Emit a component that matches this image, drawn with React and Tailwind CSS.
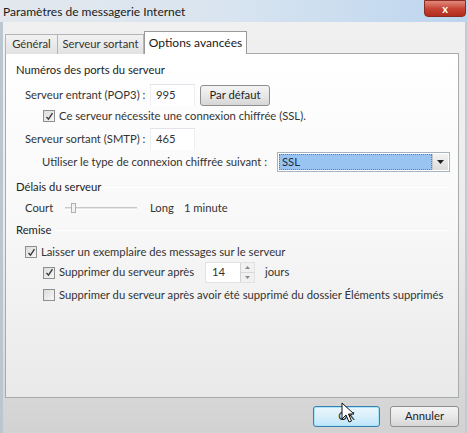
import React from "react";

const font = { fontFamily: 'Lato, "Noto Sans", sans-serif' };

function Check({ checked }) {
  return (
    <span className="inline-flex w-[12px] h-[12px] shrink-0 items-center justify-center border border-[#8e8f8f] bg-gradient-to-br from-[#dcdcdc] to-[#f7f7f7]">
      {checked && (
        <svg width="9" height="9" viewBox="0 0 9 9">
          <path d="M1.5 5 L3.5 7.2 L7.5 1.2" fill="none" stroke="#3b3b3b" strokeWidth="1.4" />
        </svg>
      )}
    </span>
  );
}

function Legend({ children }) {
  return (
    <div className="flex items-center h-[14px] pl-[10px] pr-[9px]">
      <span className="text-[#222]">{children}</span>
      <span className="flex-1 ml-[4px] h-px bg-[#c9c9c9] border-b border-white" />
    </div>
  );
}

function Field({ value }) {
  return (
    <div className="w-[45px] h-[22px] flex items-center pl-[5px] bg-white border-t border-[#e2e3ea] border-l border-l-[#eceef2] border-r border-r-[#eceef2]">
      {value}
    </div>
  );
}

export default function App() {
  return (
    <div style={font} className="relative w-[467px] h-[433px] overflow-hidden whitespace-nowrap text-[11.25px] text-[#333] bg-[#d6d6d6]">
      {/* title bar */}
      <div className="h-[22px] flex items-start justify-between bg-gradient-to-r from-[#e3e8ee] via-[#d8e4f0] to-[#bcd5ef]">
        <div className="pl-[3px] pt-[3px] text-[12px] text-[#1a1a1a]">Paramètres de messagerie Internet</div>
        <div className="w-[42px] h-[17px] mr-[1px] rounded-b-[4px] flex items-center justify-center bg-gradient-to-b from-[#e08a7e] via-[#c74535] to-[#b12d1f] border border-[#8a2a20] text-white text-[11px] font-bold leading-none">
          x
        </div>
      </div>

      {/* body */}
      <div className="h-[411px] flex flex-col pl-[2px] pr-[6px] border-l-[3px] border-l-[#bcc6d0] border-r-[2px] border-r-[#c3ccd5] bg-gradient-to-b from-[#f0f0f0] via-[#ececec] to-[#d2d2d2]">
        {/* tabs */}
        <div className="flex items-end h-[32px] pt-[9px] -mb-px relative z-10">
          <div className="h-[20px] w-[53px] flex items-center justify-center border border-[#b5b5b5] border-b-0 bg-gradient-to-b from-[#f2f2f2] to-[#e2e2e2] text-[#333]">Général</div>
          <div className="h-[20px] w-[86px] flex items-center justify-center border border-[#b5b5b5] border-b-0 border-l-0 bg-gradient-to-b from-[#f2f2f2] to-[#e2e2e2] text-[#333]">Serveur sortant</div>
          <div className="h-[23px] w-[103px] flex items-center justify-center border border-[#9a9a9a] border-b-0 bg-white text-[12px] text-[#1a1a1a]">Options avancées</div>
        </div>

        {/* panel */}
        <div className="h-[345px] flex flex-col border border-[#a6abae] bg-gradient-to-b from-white via-[#f8f8f8] to-[#e9e9e9] pt-[9px]">
          <Legend>Numéros des ports du serveur</Legend>

          <div className="flex items-center h-[22px] mt-[7px] pl-[19px]">
            <span className="w-[125px]">Serveur entrant (POP3) :</span>
            <Field value="995" />
            <div className="ml-[5px] w-[70px] h-[21px] flex items-center justify-center rounded-[3px] border border-[#8f8f8f] bg-gradient-to-b from-[#f4f4f4] via-[#e8e8e8] to-[#d6d6d6] text-[#1e1e1e]">
              Par défaut
            </div>
          </div>

          <div className="flex items-center h-[16px] mt-[2px] pl-[37px] gap-[4px]">
            <Check checked />
            <span>Ce serveur nécessite une connexion chiffrée (SSL).</span>
          </div>

          <div className="flex items-center h-[22px] mt-[4px] pl-[19px]">
            <span className="w-[125px]">Serveur sortant (SMTP) :</span>
            <Field value="465" />
          </div>

          <div className="flex items-center h-[20px] mt-[2px] pl-[36px]">
            <span className="w-[235px]">Utiliser le type de connexion chiffrée suivant :</span>
            <div className="w-[173px] h-[20px] flex border border-[#a9b3bd] bg-white p-[1px]">
              <div className="flex-1 flex items-center pl-[2px] bg-[#99c4f2] border border-dotted border-[#5a7fa8] text-[#1a2a40]">SSL</div>
              <div className="w-[16px] flex items-center justify-center border-l border-[#c9c9c9] bg-gradient-to-b from-[#f3f3f3] to-[#dcdcdc]">
                <svg width="7" height="4" viewBox="0 0 7 4"><path d="M0 0 H7 L3.5 4 Z" fill="#222" /></svg>
              </div>
            </div>
          </div>

          <div className="mt-[8px]">
            <Legend>Délais du serveur</Legend>
          </div>

          <div className="flex items-center h-[16px] mt-[6px] pl-[19px]">
            <span className="w-[40px]">Court</span>
            <div className="relative w-[72px] h-[10px] flex items-center">
              <div className="w-full h-[3px] border-t border-[#c8c8c8] border-b border-b-white bg-[#e4e4e4]" />
              <div className="absolute left-[6px] top-0 w-[5px] h-[10px] border border-[#b0b0b0] bg-[#f2f2f2]" />
            </div>
            <span className="ml-[13px]">Long</span>
            <span className="ml-[10px]">1 minute</span>
          </div>

          <div className="mt-[7px]">
            <Legend>Remise</Legend>
          </div>

          <div className="flex items-center h-[16px] mt-[7px] pl-[19px] gap-[4px]">
            <Check checked />
            <span>Laisser un exemplaire des messages sur le serveur</span>
          </div>

          <div className="flex items-center h-[21px] mt-[2px] pl-[37px]">
            <Check checked />
            <span className="w-[150px] pl-[4px]">Supprimer du serveur après</span>
            <div className="w-[50px] h-[21px] flex border border-[#e0e2e6] bg-white">
              <div className="flex-1 flex items-center pl-[6px]">14</div>
              <div className="w-[14px] flex flex-col border-l border-[#d4d4d4] bg-[#f1f1f1]">
                <div className="flex-1 flex items-center justify-center border-b border-[#d8d8d8]">
                  <svg width="5" height="3" viewBox="0 0 5 3"><path d="M0 3 H5 L2.5 0 Z" fill="#8a8a8a" /></svg>
                </div>
                <div className="flex-1 flex items-center justify-center">
                  <svg width="5" height="3" viewBox="0 0 5 3"><path d="M0 0 H5 L2.5 3 Z" fill="#8a8a8a" /></svg>
                </div>
              </div>
            </div>
            <span className="ml-[10px]">jours</span>
          </div>

          <div className="flex items-center h-[16px] mt-[4px] pl-[37px] gap-[4px]">
            <Check />
            <span>Supprimer du serveur après avoir été supprimé du dossier Éléments supprimés</span>
          </div>
        </div>

        {/* buttons */}
        <div className="flex justify-end gap-[10px] mt-[8px]">
          <div className="w-[67px] h-[21px] flex items-center justify-center rounded-[3px] border border-[#3c7fb1] shadow-[inset_0_0_0_1px_#a8e3f7] bg-gradient-to-b from-[#eaf6fd] via-[#d9effa] to-[#bee6fd] text-[#1e1e1e]">
            OK
          </div>
          <div className="w-[69px] h-[21px] flex items-center justify-center rounded-[3px] border border-[#8f8f8f] bg-gradient-to-b from-[#f4f4f4] via-[#e8e8e8] to-[#d6d6d6] text-[#1e1e1e]">
            Annuler
          </div>
        </div>
      </div>

      {/* mouse cursor */}
      <svg className="absolute left-[341px] top-[402px]" width="14" height="22" viewBox="0 0 14 22">
        <path d="M1 1 L1 17 L5 13 L8 20 L10.5 19 L7.5 12 L13 12 Z" fill="white" stroke="#111" strokeWidth="1" strokeLinejoin="round" />
      </svg>
    </div>
  );
}
